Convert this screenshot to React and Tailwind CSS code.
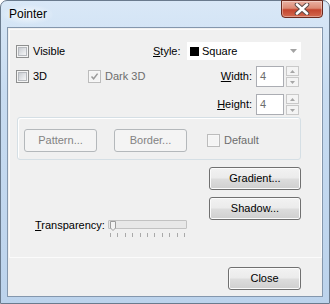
import React from "react";

function Check({ checked = false, disabled = false }) {
  return (
    <div
      className={
        disabled
          ? "w-[13px] h-[13px] border border-[#bcbcbc] bg-[#f7f7f7] flex items-center justify-center shrink-0"
          : "w-[13px] h-[13px] border border-[#8e8f8f] bg-[#f4f4f4] flex items-center justify-center shrink-0"
      }
    >
      <div
        className={
          disabled
            ? "w-[9px] h-[9px] bg-[#f4f4f4] flex items-center justify-center"
            : "w-[9px] h-[9px] border border-[#b6b9be] bg-[linear-gradient(135deg,#c9ccd1_0%,#e4e6e9_60%,#f5f5f5_100%)]"
        }
      >
        {checked && (
          <svg width="9" height="9" viewBox="0 0 9 9">
            <path d="M1.5 4.5 L3.6 6.8 L7.6 1.6" fill="none" stroke="#9a9a9a" strokeWidth="1.5" />
          </svg>
        )}
      </div>
    </div>
  );
}

function Btn({ children, disabled = false, className = "" }) {
  return (
    <div
      className={
        disabled
          ? `${className} h-[23px] shrink-0 rounded-[3px] border border-[#b4b8bb] bg-[#f4f4f4] text-[#838383] flex items-center justify-center`
          : `${className} h-[23px] shrink-0 rounded-[3px] border border-[#707070] bg-[linear-gradient(180deg,#f2f2f2_0%,#ebebeb_48%,#dddddd_52%,#cfcfcf_100%)] shadow-[inset_0_0_0_1px_#fbfbfb] text-black flex items-center justify-center`
      }
    >
      {children}
    </div>
  );
}

function Spin() {
  return (
    <div className="ml-[2px] w-[13px] h-[21px] flex flex-col gap-[1px] shrink-0">
      <div className="h-[10px] border border-[#c9c9c9] bg-[#f4f4f4] flex items-center justify-center">
        <svg width="5" height="3" viewBox="0 0 5 3">
          <path d="M0 3 L2.5 0 L5 3 Z" fill="#a6a6a6" />
        </svg>
      </div>
      <div className="h-[10px] border border-[#c9c9c9] bg-[#f4f4f4] flex items-center justify-center">
        <svg width="5" height="3" viewBox="0 0 5 3">
          <path d="M0 0 L2.5 3 L5 0 Z" fill="#a6a6a6" />
        </svg>
      </div>
    </div>
  );
}

function NumField({ label, under, rest }) {
  return (
    <div className="ml-auto mr-[22px] flex items-center">
      <span className="text-black">
        <span className="underline">{under}</span>
        {rest}
      </span>
      <div className="ml-[4px] w-[28px] h-[21px] border border-[#abadb3] bg-white text-[#6d6d6d] pl-[3px] flex items-center">
        {label}
      </div>
      <Spin />
    </div>
  );
}

export default function App() {
  const ticks = Array.from({ length: 11 });
  return (
    <div className="w-[330px] h-[304px] bg-white font-['Liberation_Sans',Arial,sans-serif] text-[11px] leading-[13px] text-black">
      <div className="w-full h-full rounded-t-[7px] border border-[#6a7b8e] bg-[linear-gradient(180deg,#d9e8f7_0%,#c8dcf1_30%,#bcd3ec_100%)] flex flex-col">
        {/* title bar */}
        <div className="h-[26px] flex items-start">
          <div className="h-[26px] flex items-center pl-[2px]">
            <span className="px-[6px] py-[2px] rounded-full bg-[radial-gradient(ellipse_at_center,rgba(255,255,255,0.75)_0%,rgba(255,255,255,0)_75%)] text-[12px] leading-[15px] text-black">
              Pointer
            </span>
          </div>
          <div className="ml-auto mr-[6px] -mt-[1px] w-[42px] h-[18px] rounded-b-[4px] border border-[#6b2a1f] bg-[linear-gradient(180deg,#eab1a3_0%,#dc8a75_45%,#c4452e_55%,#d3694f_100%)] shadow-[inset_0_0_0_1px_rgba(255,255,255,0.35)] flex items-center justify-center">
            <svg width="16" height="12" viewBox="0 0 16 12">
              <path d="M3 1.5 L13 10.5 M13 1.5 L3 10.5" stroke="#5b4a48" strokeWidth="4.6" strokeLinecap="round" />
              <path d="M3 1.5 L13 10.5 M13 1.5 L3 10.5" stroke="#ffffff" strokeWidth="2.6" strokeLinecap="round" />
            </svg>
          </div>
        </div>

        {/* client */}
        <div className="mx-[6px] h-[270px] border border-[#8497ad] bg-[#f0f0f0] flex flex-col">
          <div className="mt-[1px] ml-[1px] w-[313px] h-[229px] border border-[#fbfbfb] pl-[6px] flex flex-col">
            {/* row A */}
            <div className="mt-[12px] h-[18px] flex items-center">
              <div className="w-[137px] flex items-center">
                <Check />
                <span className="ml-[4px]">Visible</span>
              </div>
              <div className="w-[34px]">
                <span className="underline">S</span>tyle:
              </div>
              <div className="w-[114px] h-[18px] bg-white flex items-center">
                <div className="ml-[3px] w-[9px] h-[9px] bg-black" />
                <span className="ml-[3px]">Square</span>
                <svg className="ml-auto mr-[4px]" width="7" height="4" viewBox="0 0 7 4">
                  <path d="M0 0 L7 0 L3.5 4 Z" fill="#a3a3a3" />
                </svg>
              </div>
            </div>

            {/* row B */}
            <div className="mt-[6px] h-[21px] flex items-center">
              <div className="w-[72px] flex items-center">
                <Check />
                <span className="ml-[4px]">3D</span>
              </div>
              <div className="flex items-center">
                <Check checked disabled />
                <span className="ml-[4px] text-[#6d6d6d]">Dark 3D</span>
              </div>
              <NumField label="4" under="W" rest="idth:" />
            </div>

            {/* row C */}
            <div className="mt-[7px] h-[21px] flex items-center">
              <NumField label="4" under="H" rest="eight:" />
            </div>

            {/* group box */}
            <div className="mt-[2px] ml-[1px] w-[284px] h-[43px] rounded-[3px] border border-[#d5dfe5] shadow-[inset_1px_1px_0_#ffffff] pl-[6px] pt-[11px] flex items-start">
              <Btn disabled className="w-[73px]">Pattern...</Btn>
              <Btn disabled className="ml-[17px] w-[73px]">Border...</Btn>
              <div className="ml-[20px] h-[23px] flex items-center">
                <Check disabled />
                <span className="ml-[4px] text-[#6d6d6d]">Default</span>
              </div>
            </div>

            {/* gradient */}
            <Btn className="mt-[7px] ml-[193px] w-[92px]">Gradient...</Btn>

            {/* shadow + transparency */}
            <div className="mt-[7px] flex items-start">
              <div className="ml-[19px] mt-[21px] w-[152px] flex items-start">
                <div className="w-[74px] h-[14px] leading-[14px]">
                  <span className="underline">T</span>ransparency:
                </div>
                <div className="flex flex-col">
                  <div className="relative mt-[2px] w-[79px] h-[9px] border border-[#c2c2c2] bg-[#e8e8e8] rounded-[1px]">
                    <svg className="absolute left-[1px] top-[0px]" width="6" height="10" viewBox="0 0 6 10">
                      <path d="M0.5 0.5 H5.5 V7 L3 9.5 L0.5 7 Z" fill="#f3f3f3" stroke="#9c9c9c" strokeWidth="1" />
                    </svg>
                  </div>
                  <div className="mt-[4px] ml-[2px] w-[75px] h-[4px] flex justify-between">
                    {ticks.map((_, i) => (
                      <div key={i} className="w-[1px] h-[4px] bg-[#a9a9a9]" />
                    ))}
                  </div>
                </div>
              </div>
              <Btn className="ml-[22px] w-[92px]">Shadow...</Btn>
            </div>
          </div>

          {/* close */}
          <div className="mt-[9px] pr-[21px] flex justify-end">
            <Btn className="w-[73px]">Close</Btn>
          </div>
        </div>
      </div>
    </div>
  );
}
